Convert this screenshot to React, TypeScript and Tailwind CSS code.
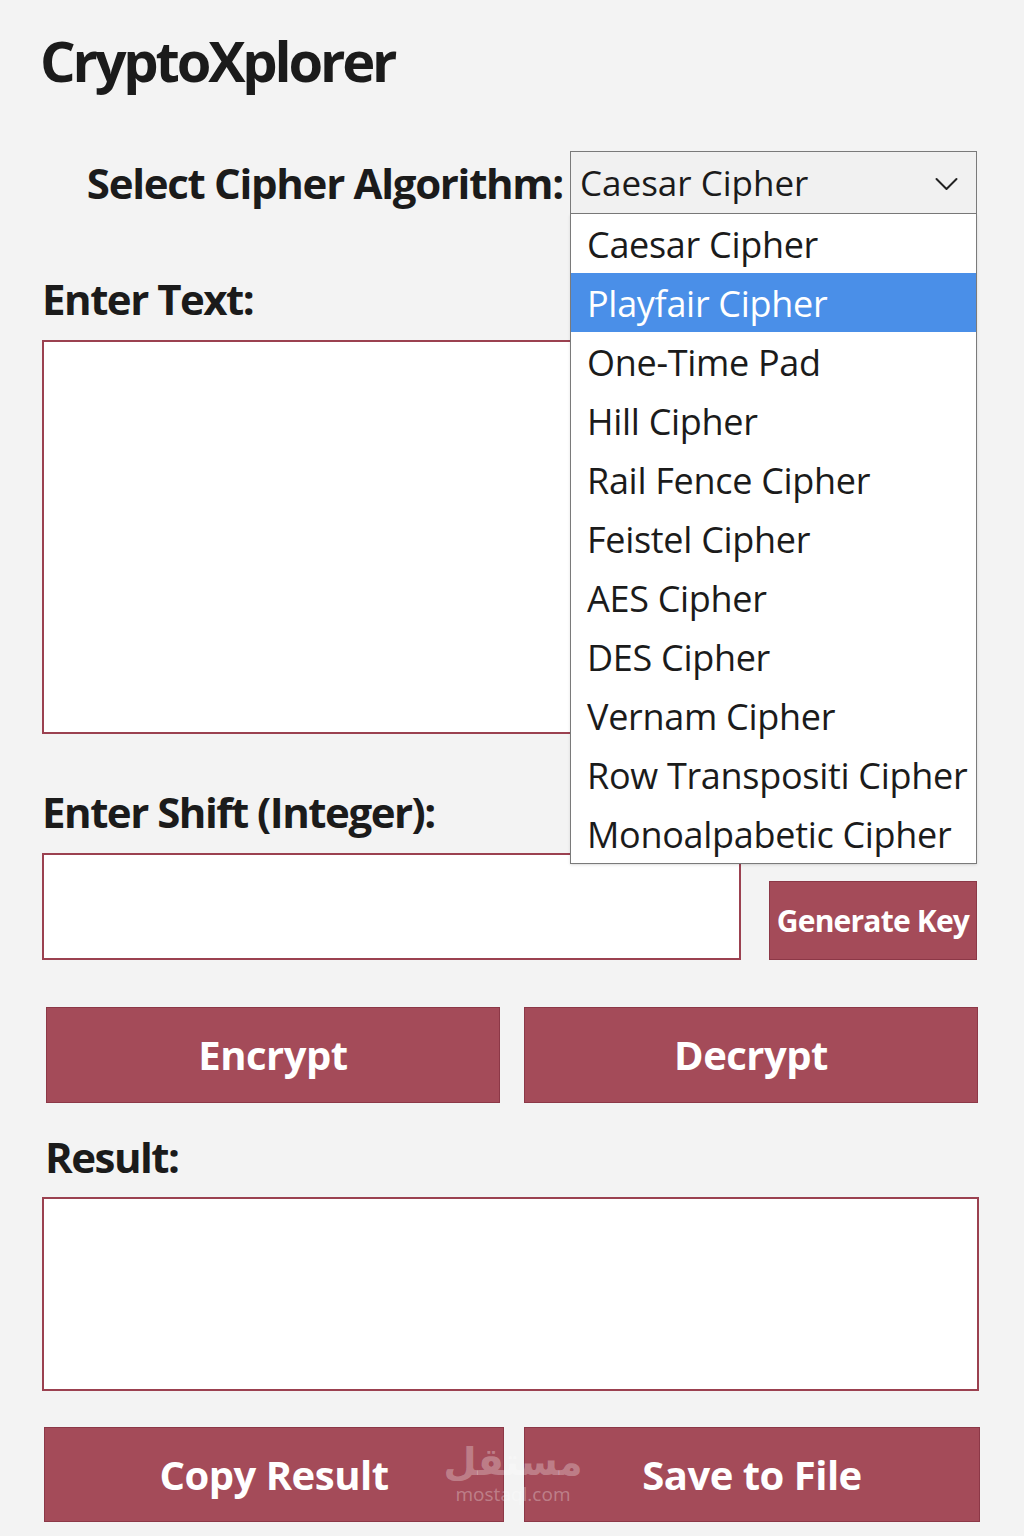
const ciphers = [
  "Caesar Cipher",
  "Playfair Cipher",
  "One-Time Pad",
  "Hill Cipher",
  "Rail Fence Cipher",
  "Feistel Cipher",
  "AES Cipher",
  "DES Cipher",
  "Vernam Cipher",
  "Row Transpositi Cipher",
  "Monoalpabetic Cipher",
];

const btn =
  "flex items-center justify-center bg-[#a44b59] border border-[#8c3847] text-white font-bold";

export default function App() {
  return (
    <div className="relative min-h-[1536px] w-[1024px] overflow-hidden bg-[#f3f3f3] font-['Open_Sans',sans-serif] text-[#1b1b1b]">
      <div className="flex flex-col pl-[42px] pr-[46px]">
        <h1 className="-ml-[2px] mt-[24px] h-[72px] text-[56px] font-bold leading-[72px] tracking-[-3.2px]">
          CryptoXplorer
        </h1>

        {/* cipher select */}
        <div className="mt-[55px] flex h-[63px] items-center">
          <label className="w-[528px] pr-[7px] text-right text-[42px] font-bold leading-none tracking-[-1.3px]">
            Select Cipher Algorithm:
          </label>
          <div className="relative z-10 h-[63px] w-[407px]">
            <div className="flex h-full items-center justify-between border border-[#7a7a7a] bg-[#f1f1f1] pl-[9px] pr-[18px]">
              <span className="text-[35px] leading-none">Caesar Cipher</span>
              <svg width="23" height="14" viewBox="0 0 23 14" fill="none" className="mt-[2px]">
                <polyline points="1.5,2 11.5,12 21.5,2" stroke="#222" strokeWidth="2" strokeLinecap="round" strokeLinejoin="round" />
              </svg>
            </div>
            <ul className="absolute left-0 top-full w-[407px] border border-t-0 border-[#7a7a7a] bg-white shadow-sm">
              {ciphers.map((c, i) => (
                <li
                  key={c}
                  className={
                    i === 1
                      ? "flex h-[59px] items-center whitespace-nowrap bg-[#4a8fe8] pl-[16px] pt-[3px] text-[36px] leading-none tracking-[-0.3px] text-white"
                      : "flex h-[59px] items-center whitespace-nowrap pl-[16px] pt-[3px] text-[36px] leading-none tracking-[-0.3px]"
                  }
                >
                  {c}
                </li>
              ))}
            </ul>
          </div>
        </div>

        <label className="mt-[64px] text-[42px] font-bold leading-none tracking-[-1.5px]">Enter Text:</label>
        <div className="mt-[20px] h-[394px] w-[934px] border-2 border-[#9b4150] bg-white" />

        <label className="mt-[57px] text-[42px] font-bold leading-none tracking-[-1.5px]">
          Enter Shift (Integer):
        </label>
        <div className="mt-[20px] flex items-end gap-[28px]">
          <div className="h-[107px] w-[699px] border-2 border-[#9b4150] bg-white" />
          <button className={`${btn} h-[79px] w-[208px] text-[30px] tracking-[-0.8px]`}>
            Generate Key
          </button>
        </div>

        <div className="ml-[4px] mt-[47px] grid grid-cols-2 gap-[24px]">
          <button className={`${btn} h-[96px] text-[40px] tracking-[-0.5px]`}>Encrypt</button>
          <button className={`${btn} h-[96px] text-[40px] tracking-[-0.5px]`}>Decrypt</button>
        </div>

        <label className="ml-[3px] mt-[33px] text-[42px] font-bold leading-none tracking-[-1.5px]">Result:</label>
        <div className="mt-[19px] h-[194px] w-[937px] border-2 border-[#9b4150] bg-white" />

        <div className="ml-[2px] mt-[36px] grid w-[936px] grid-cols-[460px_456px] gap-[20px]">
          <button className={`${btn} h-[95px] text-[40px] tracking-[-0.5px]`}>Copy Result</button>
          <button className={`${btn} h-[95px] text-[40px] tracking-[-0.5px]`}>Save to File</button>
        </div>
      </div>

      {/* watermark */}
      <div className="pointer-events-none absolute left-[450px] top-[1440px] flex w-[126px] flex-col items-center text-white/30">
        <span className="font-['DejaVu_Sans',sans-serif] text-[38px] font-bold leading-[44px]">مستقل</span>
        <span className="text-[19px] leading-[20px]">mostaql.com</span>
      </div>
    </div>
  );
}
